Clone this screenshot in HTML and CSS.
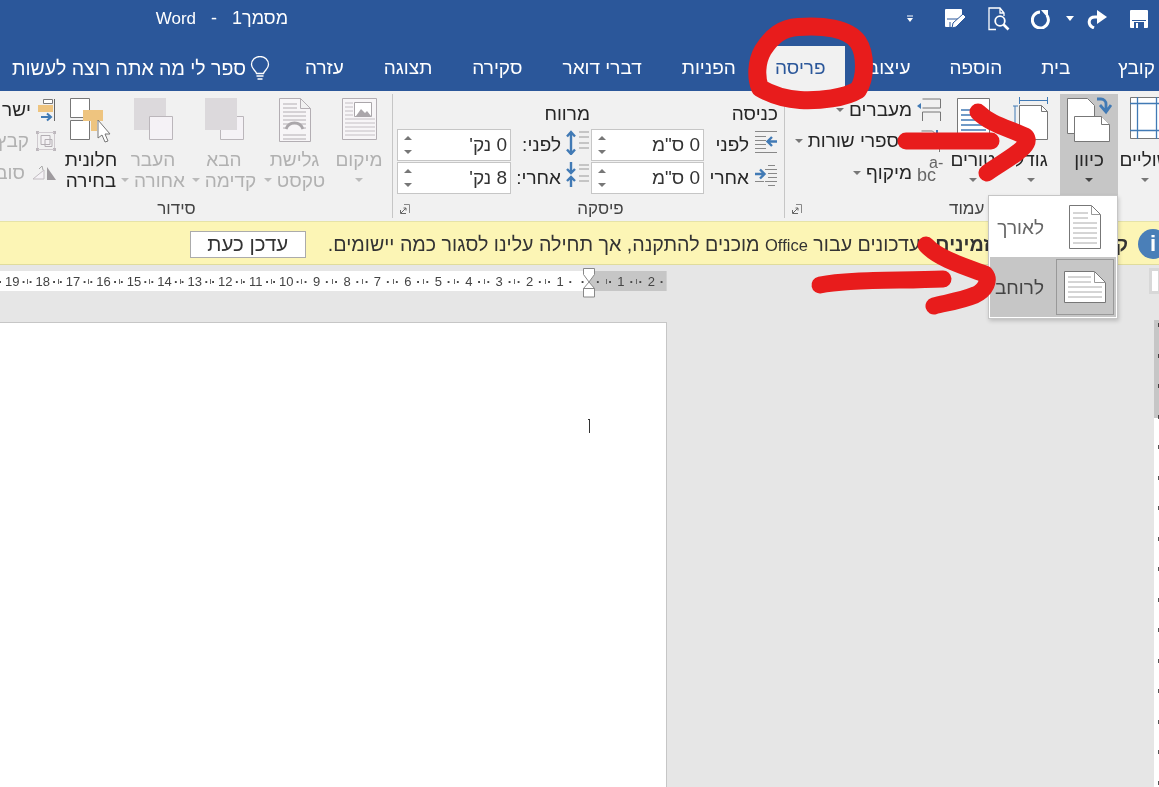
FILE: index.html
```html
<!DOCTYPE html>
<html lang="he">
<head>
<meta charset="utf-8">
<title>מסמך1 - Word</title>
<link rel="stylesheet" href="styles.css">
</head>
<body>
<div class="app">
  <header class="titlebar">
    <div class="doc-title" dir="rtl">מסמך1&nbsp;&nbsp; - &nbsp;&nbsp;<span class="latin">Word</span></div>
    <div class="qat">
      <svg class="q-more" viewBox="0 0 8 8" width="8" height="8"><path d="M1 1h6" stroke="#fff"/><path d="M1 3h6l-3 4z" fill="#fff"/></svg>
      <svg class="q-edit" viewBox="0 0 22 22" width="22" height="22"><path d="M1 2a1 1 0 0 1 1-1h15a1 1 0 0 1 1 1v7L8 19H2a1 1 0 0 1-1-1z" fill="#fff"/><path d="M3 11h13M6 14v5" stroke="#2b579a" fill="none"/><path d="M8 20l1-5 10-9 3 3-10 10z" fill="#fff" stroke="#2b579a"/></svg>
      <svg class="q-prev" viewBox="0 0 22 24" width="22" height="24"><path d="M8 22.500H1V1h11l4 5v3M12 1v5h4" fill="none" stroke="#fff" stroke-width="1.300"/><circle cx="12" cy="14" r="4.800" fill="#2b579a" stroke="#fff" stroke-width="1.800"/><path d="M15.500 17.500l5 5" stroke="#fff" stroke-width="2.600"/></svg>
      <svg class="q-undo" viewBox="0 0 20 20" width="20" height="20"><path d="M16 6.500A8 8 0 1 1 9 3" fill="none" stroke="#fff" stroke-width="3"/><path d="M10 1h7v8z" fill="#fff"/></svg>
      <svg class="q-drop" viewBox="0 0 8 5" width="8" height="5"><path d="M0 0h8L4 5z" fill="#fff"/></svg>
      <svg class="q-redo" viewBox="0 0 22 20" width="22" height="20"><path d="M12 8H9C2 8 1 16 8 19" fill="none" stroke="#fff" stroke-width="3"/><path d="M11 1l10 7-10 7z" fill="#fff"/></svg>
      <svg class="q-save" viewBox="0 0 20 20" width="20" height="20"><path d="M1 2a1 1 0 0 1 1-1h16a1 1 0 0 1 1 1v16a1 1 0 0 1-1 1H2a1 1 0 0 1-1-1z" fill="#fff"/><path d="M3 11.500h14" stroke="#2b579a"/><path d="M5 13h10v6H5z" fill="#2b579a"/><path d="M7 14h2v5H7z" fill="#fff"/></svg>
    </div>
  </header>

  <nav class="tabs" dir="rtl">
    <span class="tab tab-file">קובץ</span>
    <span class="tab">בית</span>
    <span class="tab">הוספה</span>
    <span class="tab tab-design">עיצוב</span>
    <span class="tab tab-active">פריסה</span>
    <span class="tab">הפניות</span>
    <span class="tab">דברי דואר</span>
    <span class="tab">סקירה</span>
    <span class="tab">תצוגה</span>
    <span class="tab">עזרה</span>
    <span class="tell">
      <svg viewBox="0 0 22 26" width="22" height="26"><path d="M7.5 17.500C6.500 14 2.500 13 2.500 8.500a8.500 8 0 0 1 17 0c0 4.500-4 5.500-5 9z" fill="none" stroke="#fff" stroke-width="1.300"/><path d="M7.500 20h7M8.500 23h5" stroke="#fff" stroke-width="1.500"/></svg>
      <span>ספר לי מה אתה רוצה לעשות</span>
    </span>
  </nav>

  <section class="ribbon">
    <div class="group group-arrange">
      <div class="group-body">
        <div class="small-col">
          <div class="small-row">
            <svg viewBox="37 97 20 24" width="20" height="24"><path d="M54.500 98v22" stroke="#666"/><path d="M43.500 98.500h9v4h-9z" fill="#fff" stroke="#777"/><path d="M38 104h15v7H38z" fill="#eec47f"/><path d="M41 116h9M47 112.500l4 3.500-4 3.500" fill="none" stroke="#417ab5" stroke-width="2"/></svg>
            <span class="small-text">ישר</span>
          </div>
          <div class="small-row muted">
            <svg viewBox="35 128 22 24" width="22" height="24"><path d="M36 130h3v3h-3zM53 130h3v3h-3zM36 147h3v3h-3zM53 147h3v3h-3z" fill="#bdb8bd"/><path d="M38 131.500h16M37.500 133v14M54.500 133v14M38 148.500h16" stroke="#cfcacf"/><path d="M41 134.500h9v9h-9zM45 138.500h7v7h-7z" fill="#f5f2f6" fill-opacity=".5" stroke="#b3aeb3"/></svg>
            <span class="small-text">קבץ</span>
          </div>
          <div class="small-row muted">
            <svg viewBox="33 160 26 22" width="26" height="22"><path d="M35 177l11-9v9z" fill="#f5f2f6" stroke="#c2bdc2"/><path d="M49 165l9 13H49z" fill="#9e9a9e"/><path d="M41 167l3-3 1 4" fill="none" stroke="#aaa"/></svg>
            <span class="small-text">סובב</span>
          </div>
        </div>
        <div class="big w-select">
          <div class="big-icon"><svg viewBox="70 98 42 46" width="42" height="46">
            <path d="M70.500 99.500h19v19h-19zM70.500 121.500h19v19h-19z" fill="#fff" stroke="#777"/>
            <path d="M83 111h20v11h-6v10h-6v-10h-8z" fill="#eec47f"/>
            <path d="M98 121v18l4-3 3 7 3-1-3-7h5z" fill="#fff" stroke="#777"/></svg></div>
          <div class="big-label">חלונית<br>בחירה</div>
        </div>
        <div class="big w-back muted">
          <div class="big-icon"><svg viewBox="133 99 41 44" width="41" height="44"><path d="M134 100h32v32h-32z" fill="#dcd9dc"/><path d="M149.500 118.500h23v23h-23z" fill="#f5f2f6" stroke="#bbb6bb"/></svg></div>
          <div class="big-label">העבר<br>אחורה<i class="caret"></i></div>
        </div>
        <div class="big w-fwd muted">
          <div class="big-icon"><svg viewBox="203 99 41 44" width="41" height="44"><path d="M219.500 118.500h23v23h-23z" fill="#f5f2f6" stroke="#bbb6bb"/><path d="M204 100h32v32h-32z" fill="#dcd9dc"/></svg></div>
          <div class="big-label">הבא<br>קדימה<i class="caret"></i></div>
        </div>
        <div class="big w-wrap muted">
          <div class="big-icon"><svg viewBox="279 99 33 46" width="33" height="46"><path d="M280.500 100.500h21l10 10v33h-31zM301.500 100.500v10h10" fill="#f7f5f7" stroke="#b3aeb3"/><path d="M284 106h14M284 110h14M284 114h23M284 118h23M284 137h23M284 141h23" stroke="#b3aeb3"/><path d="M287 131a9 9 0 0 1 17 0" fill="none" stroke="#aaa6aa" stroke-width="3"/><path d="M284 122h23M284 126h5M302 126h5M284 130h2M305 130h2" stroke="#b3aeb3"/></svg></div>
          <div class="big-label">גלישת<br>טקסט<i class="caret"></i></div>
        </div>
        <div class="big w-pos muted">
          <div class="big-icon"><svg viewBox="341 99 37 44" width="37" height="44"><path d="M342.500 100.500h34v41h-34z" fill="#f7f5f7" stroke="#b3aeb3"/><path d="M345 105h8M345 109h8M345 113h8M345 117h8M345 121h30M345 125h30M345 129h30M345 133h30M345 137h30" stroke="#c4bfc4"/><path d="M354.500 104.500h17v14h-17z" fill="#fff" stroke="#aaa6aa"/><path d="M356 118l5-7 4 4 2-2 4 5z" fill="#aaa6aa"/></svg></div>
          <div class="big-label">מיקום<br><i class="caret caret-only"></i></div>
        </div>
      </div>
      <div class="group-label label-arrange">סידור</div>
    </div>

    <div class="group group-para">
      <div class="group-body para-body">
        <div class="para-col para-left">
          <div class="para-head">מרווח</div>
          <div class="para-row">
            <div class="spin"><span class="spin-btns"><i class="up"></i><i class="down"></i></span><span class="spin-val">0 נק'</span></div>
            <span class="para-label">לפני:</span>
            <svg viewBox="564 132 24 26" width="24" height="26"><path d="M577 135h10M577 140h10M577 146h10M577 151h10" stroke="#999"/><path d="M569 136v20M565 139.500l4-4.500 4 4.500M565 152.500l4 4.500 4-4.500" fill="none" stroke="#417ab5" stroke-width="2.400"/></svg>
          </div>
          <div class="para-row">
            <div class="spin"><span class="spin-btns"><i class="up"></i><i class="down"></i></span><span class="spin-val">8 נק'</span></div>
            <span class="para-label">אחרי:</span>
            <svg viewBox="564 165 24 26" width="24" height="26"><path d="M577 168h10M577 172h10M577 179h10M577 184h10" stroke="#999"/><path d="M569 165v11M569 180v10M565 172l4 4 4-4M565 184l4-4 4 4" fill="none" stroke="#417ab5" stroke-width="2.400"/></svg>
          </div>
        </div>
        <div class="para-col para-right">
          <div class="para-head">כניסה</div>
          <div class="para-row">
            <div class="spin"><span class="spin-btns"><i class="up"></i><i class="down"></i></span><span class="spin-val">0 ס"מ</span></div>
            <span class="para-label">לפני</span>
            <svg viewBox="752 132 24 26" width="24" height="26"><path d="M753 134.500h22M753 155.500h22M753 139.500h11M753 143.500h11M753 147.500h11M753 151.500h11" stroke="#888"/><path d="M775 144.500h-9M770 140l-4.500 4.500 4.500 4.500" fill="none" stroke="#417ab5" stroke-width="2.400"/></svg>
            </div>
          <div class="para-row">
            <div class="spin"><span class="spin-btns"><i class="up"></i><i class="down"></i></span><span class="spin-val">0 ס"מ</span></div>
            <span class="para-label">אחרי</span>
            <svg viewBox="752 165 24 26" width="24" height="26"><path d="M766 168.500h7M763 172.500h12M766 176.500h9M766 180.500h9M763 184.500h12M766 188.500h7" stroke="#888"/><path d="M753 177h9M758 172.500l4.500 4.500-4.500 4.500" fill="none" stroke="#417ab5" stroke-width="2.400"/><path d="M753 184.500h9" stroke="#888"/></svg>
          </div>
        </div>
      </div>
      <div class="group-label label-para">פיסקה</div>
      <svg class="launcher" viewBox="0 0 10 10" width="10" height="10"><path d="M4 .5h5.500V9" fill="none" stroke="#888"/><path d="M.500 6v3.500H6M1 9l5-5M3.500 4H6v2.500" fill="none" stroke="#666"/></svg>
    </div>

    <div class="group group-page">
      <div class="group-body">
        <div class="small-col page-col">
          <div class="small-row">
            <svg viewBox="917 97 24 24" width="24" height="24"><path d="M922.500 98h18v9h-18M922.500 120v-9h18v9" fill="none" stroke="#777"/><path d="M917 105l4-3v6z" fill="#417ab5"/></svg>
            <span class="small-text">מעברים</span><i class="caret"></i>
          </div>
          <div class="small-row">
            <svg viewBox="917 128 24 24" width="24" height="24"><path d="M921.500 130h11l7 7v14" fill="#fff" stroke="#777"/><path d="M937 129v4" stroke="#417ab5" stroke-width="2"/></svg>
            <span class="small-text">מספרי שורות</span><i class="caret"></i>
          </div>
          <div class="small-row">
            <span class="bc"><span>a-</span><span>bc</span></span>
            <span class="small-text">מיקוף</span><i class="caret"></i>
          </div>
        </div>
        <div class="big w-page">
          <div class="big-icon"><svg viewBox="956 99 35 48" width="35" height="48"><path d="M957.500 100.500h32v46h-32z" fill="#fff" stroke="#777"/><path d="M961 112h25M961 117h25M961 122h25M961 127h25M961 132h25" stroke="#417ab5" stroke-width="1.500"/></svg></div>
          <div class="big-label">טורים<br><i class="caret caret-only"></i></div>
        </div>
        <div class="big w-page">
          <div class="big-icon"><svg viewBox="1014 99 37 48" width="37" height="48"><path d="M1020 102.500h28M1020.500 99v7M1048.500 99v7M1016 108v33M1013 108h6" stroke="#417ab5" fill="none"/><path d="M1020.500 107.500h22l6 6v28h-28z" fill="#fff" stroke="#777"/><path d="M1042.500 107.500v6h6" fill="none" stroke="#777"/></svg></div>
          <div class="big-label">גודל<br><i class="caret caret-only"></i></div>
        </div>
        <div class="big w-orient active">
          <div class="big-icon"><svg viewBox="1066 98 46 46" width="46" height="46">
            <path d="M1067.500 99.500h20l7 7v28h-27z" fill="#fff" stroke="#777"/>
            <path d="M1074.500 117.500h27l8 8v17h-35z" fill="#fff" stroke="#777"/>
            <path d="M1101.500 117.500v8h8" fill="#fff" stroke="#777"/>
            <path d="M1097 100h4a5 5 0 0 1 5 5v6M1100 106l6 7 5-7" fill="none" stroke="#417ab5" stroke-width="2.800"/></svg></div>
          <div class="big-label">כיוון<br><i class="caret caret-only caret-dark"></i></div>
        </div>
        <div class="big w-margins">
          <div class="big-icon"><svg viewBox="1131 100 38 44" width="38" height="44"><path d="M1131.500 100.500h37v41h-37z" fill="#fff" stroke="#777"/><path d="M1131 106.500h38M1131 133.500h38M1138.500 100v42M1157.500 100v42" stroke="#417ab5" stroke-width="1.300"/></svg></div>
          <div class="big-label">שוליים<br><i class="caret caret-only"></i></div>
        </div>
      </div>
      <div class="group-label label-page">עמוד</div>
      <svg class="launcher" viewBox="0 0 10 10" width="10" height="10"><path d="M4 .5h5.500V9" fill="none" stroke="#888"/><path d="M.500 6v3.500H6M1 9l5-5M3.500 4H6v2.500" fill="none" stroke="#666"/></svg>
    </div>
  </section>

  <section class="notice" dir="rtl">
    <span class="info">i</span>
    <strong>קיימים עדכונים זמינים</strong>
    <span class="notice-text">עדכונים עבור <span class="latin">Office</span> מוכנים להתקנה, אך תחילה עלינו לסגור כמה יישומים.</span>
    <button class="update-btn">עדכן כעת</button>
  </section>

  <section class="ruler-row">
    <div class="ruler">
      <span class="tick">19</span><span class="tick">18</span><span class="tick">17</span><span class="tick">16</span><span class="tick">15</span><span class="tick">14</span><span class="tick">13</span><span class="tick">12</span><span class="tick">11</span><span class="tick">10</span><span class="tick">9</span><span class="tick">8</span><span class="tick">7</span><span class="tick">6</span><span class="tick">5</span><span class="tick">4</span><span class="tick">3</span><span class="tick">2</span><span class="tick">1</span><span class="tick tick-zero"></span><span class="tick">1</span><span class="tick">2</span>
      <svg class="indent-marker" viewBox="0 0 12 30" width="12" height="30"><path d="M.5.500h11v6L6 14 .5 6.500zM.5 20.500L6 14l5.500 6.500zM.5 20.500h11v8.500H.5z" fill="#fff" stroke="#888"/></svg>
    </div>
    <div class="ruler-corner"></div>
  </section>

  <main class="workspace">
    <div class="page"><span class="text-caret"></span></div>
    <div class="v-ruler"><div class="v-ruler-margin"></div></div>
  </main>

  <div class="orient-menu" dir="rtl">
    <div class="orient-item">
      <span class="orient-icon"><svg viewBox="0 0 32 44" width="32" height="44"><path d="M.5.500h22l9 9v34H.5z" fill="#fff" stroke="#777"/><path d="M22.500.500v9h9" fill="none" stroke="#999"/><path d="M4 8h15M4 13h15M4 18h24M4 23h24M4 28h24M4 33h24M4 38h24" stroke="#aaa"/></svg></span>
      <span class="orient-text">לאורך</span>
    </div>
    <div class="orient-item selected">
      <span class="orient-icon"><svg viewBox="0 0 42 32" width="42" height="32"><path d="M.5.500h30l11 11v20H.5z" fill="#fff" stroke="#777"/><path d="M30.500.500v11h11" fill="none" stroke="#999"/><path d="M4 6h23M4 11h23M4 16h34M4 21h34M4 26h34" stroke="#aaa"/></svg></span>
      <span class="orient-text">לרוחב</span>
    </div>
  </div>

  <svg class="ink" viewBox="0 0 1159 787" width="1159" height="787" aria-hidden="true">
    <g fill="none" stroke="#e81c1c" stroke-linecap="round" stroke-linejoin="round">
      <path stroke-width="18" d="M763 50C772 36 782 28 798 27C822 25 848 28 858 42C866 54 866 78 858 90C845 98 820 101 800 100C785 99 770 94 760 88C756 78 756 62 763 50Z"/>
      <path stroke-width="17" d="M906 141H991"/>
      <path stroke-width="17" d="M978 112C990 124 1008 128 1025 136C1030 140 1026 146 1018 152C1008 160 998 165 987 173"/>
      <path stroke-width="17" d="M820 285C850 279 900 281 943 279"/>
      <path stroke-width="17" d="M926 245C938 258 960 265 985 274C990 280 986 290 975 295C960 301 945 303 934 306"/>
    </g>
  </svg>
</div>
</body>
</html>
```
FILE: styles.css
```css
* { box-sizing: border-box; }
html, body { margin: 0; padding: 0; }
body { font-family: "Liberation Sans", "DejaVu Sans", sans-serif; background: #e6e6e6; }
.app { position: relative; width: 1159px; height: 787px; overflow: hidden; display: flex; flex-direction: column; color: #262626; }

.titlebar { flex: 0 0 46px; background: #2b579a; display: flex; align-items: center; color: #fff; padding-left: 157px; }
.doc-title { font-size: 18px; width: 131px; white-space: nowrap; margin-top: -9px; }
.doc-title .latin { font-size: 17px; }
.qat { margin-left: auto; display: flex; align-items: center; margin-top: -9px; padding-right: 10px; }
.q-edit { margin-left: 30px; }
.q-prev { margin-left: 22px; }
.q-undo { margin-left: 21px; }
.q-drop { margin-left: 15px; }
.q-redo { margin-left: 12px; }
.q-save { margin-left: 21px; }

.tabs { flex: 0 0 45px; background: #2b579a; display: flex; align-items: center; color: #fff; font-size: 19px; padding-right: 4px; }
.tab { padding: 0 19.5px; height: 45px; line-height: 44px; white-space: nowrap; }
.tab-file { padding-right: 0; padding-left: 28px; }
.tab-design { padding-left: 23px; }
.tab-active { background: #f1f1f1; color: #2b579a; width: 89px; padding: 0; text-align: center; }
.tab-active ~ .tab { padding: 0 20px; }
.tell { display: flex; align-items: center; gap: 3px; margin-right: 14px; white-space: nowrap; font-size: 19.5px; }

.ribbon { flex: 0 0 131px; background: #f1f1f1; display: flex; border-bottom: 1px solid #e6e3a8; }
.group { position: relative; height: 124px; margin-top: 3px; flex: none; display: flex; flex-direction: column; }
.group-arrange { width: 393px; border-right: 1px solid #c6c6c6; }
.group-para { width: 392px; border-right: 1px solid #c6c6c6; }
.group-page { width: 375px; }
.group-body { flex: 1; display: flex; gap: 4px; }
.group-label { height: 22px; line-height: 26px; font-size: 17px; direction: rtl; color: #444; }
.label-arrange { text-align: center; padding-right: 39px; }
.label-para { text-align: center; padding-left: 24px; }
.label-page { padding-left: 164px; text-align: left; }
.launcher { position: absolute; left: 7px; bottom: 4px; }

.big { flex: none; display: flex; flex-direction: column; align-items: center; height: 101px; }
.big-icon { height: 55px; display: flex; align-items: flex-start; justify-content: center; width: 100%; padding-top: 3px; }
.big-label { font-size: 19px; line-height: 21px; text-align: center; direction: rtl; white-space: nowrap; }
.w-select { width: 58px; }
.w-back { width: 58px; }
.w-fwd { width: 76px; }
.w-wrap { width: 57px; }
.w-pos { width: 64px; }
.w-page { width: 54px; }
.w-orient { width: 58px; margin-left: -2px; }
.w-margins { width: 58px; margin-left: -6px; }
.w-margins .big-icon { padding-left: 7px; }
.muted { color: #b1b1b1; }
.active { background: #c6c6c6; }

.caret { display: inline-block; width: 0; height: 0; border: 4px solid transparent; border-top: 4px solid #777; border-bottom: 0; margin-right: 5px; margin-bottom: 4px; vertical-align: middle; }
.muted .caret { border-top-color: #bbb; }
.caret-only { margin-right: 0; }
.caret-dark { border-top-color: #444; }

.small-col { flex: none; width: 58px; display: flex; flex-direction: column; }
.small-row { height: 31.5px; display: flex; direction: rtl; align-items: center; gap: 6px; white-space: nowrap; font-size: 19px; }
.small-row .caret { margin: 0; }
.group-arrange .small-col { align-items: flex-start; direction: rtl; padding-right: 1px; }

.page-col { width: 157px; padding-right: 1px; }
.page-col .small-row { gap: 5px; }
.page-col .small-text { line-height: 22px; }
.bc { width: 24px; margin-top: -8px; display: flex; flex-direction: column; color: #666; font-size: 18px; line-height: 12px; text-align: left; direction: ltr; }
.bc span:first-child { padding-left: 12px; font-size: 16px; }

.para-body { gap: 1px; padding-left: 4px; }
.para-col { flex: none; display: flex; flex-direction: column; }
.para-left { width: 193px; }
.para-right { width: 187px; }
.para-head { height: 35px; line-height: 39px; font-size: 19px; direction: rtl; text-align: right; }
.para-row { height: 33px; display: flex; align-items: flex-start; }
.para-label { flex: 1; text-align: right; direction: rtl; font-size: 19px; line-height: 31px; padding-right: 5px; white-space: nowrap; }
.para-row svg { flex: none; }
.spin { flex: 0 0 114px; height: 32px; background: #fff; border: 1px solid #c6c6c6; display: flex; justify-content: space-between; align-items: center; padding: 0 3px 0 6px; }
.para-right .spin { flex-basis: 113px; }
.spin-val { direction: rtl; font-size: 19px; color: #333; }
.spin-btns { display: flex; flex-direction: column; gap: 10px; }
.spin-btns i { display: block; width: 0; height: 0; border: 4px solid transparent; }
.spin-btns .up { border-top: 0; border-bottom: 4px solid #777; }
.spin-btns .down { border-bottom: 0; border-top: 4px solid #777; }

.notice { flex: 0 0 43px; padding-top: 2px; background: #fcf5b5; border-bottom: 1px solid #e0dc9c; display: flex; align-items: center; font-size: 19.65px; color: #333; }
.notice .latin { font-size: 16.5px; }
.info { flex: none; width: 30px; height: 30px; border-radius: 50%; background: #4a7fb8; color: #fff; font-weight: bold; font-size: 22px; line-height: 30px; text-align: center; margin-right: -9px; margin-left: 10px; }
.notice strong { white-space: nowrap; margin-left: 15px; font-size: 19.7px; }
.notice-text { white-space: nowrap; }
.update-btn { width: 116px; height: 27px; margin-right: 22px; background: #fff; border: 1px solid #ababab; font: inherit; font-size: 20.5px; line-height: 24px; color: #333; padding: 0; flex: none; }

.ruler-row { flex: 0 0 57px; padding-top: 6px; display: flex; align-items: flex-start; background: #e6e6e6; }
.ruler { position: relative; flex: 0 0 666px; height: 20px; overflow: visible; display: flex; align-items: center; background: linear-gradient(to right, #fff 589px, #c6c6c6 589px); font-size: 13px; color: #444; clip-path: inset(-6px 0 -12px 0); }
.tick { flex: 0 0 30.45px; display: flex; justify-content: space-around; align-items: center; height: 100%; text-align: center; background: linear-gradient(#666, #666) left center / 1px 5px no-repeat; }
.tick:first-child { margin-left: -3px; }
.tick::before, .tick::after { content: "·"; font-weight: bold; }
.tick-zero { background: none; }
.indent-marker { position: absolute; left: 583px; top: -3px; }
.ruler-corner { margin-left: auto; margin-top: -3px; width: 12px; height: 26px; margin-right: -2px; background: #fff; border: 3px solid #d8d8d8; }

.workspace { flex: 1; min-height: 0; display: flex; background: #e6e6e6; }
.page { flex: 0 0 667px; background: #fff; border-top: 1px solid #c6c6c6; border-right: 1px solid #c6c6c6; display: flex; justify-content: flex-end; align-items: flex-start; padding: 96px 76px 0 0; }
.text-caret { width: 2px; height: 14px; border-right: 1px solid #333; border-top: 1px solid #333; }
.v-ruler { flex: none; width: 5px; margin-left: auto; margin-top: -2px; height: calc(100% + 2px); background: repeating-linear-gradient(to bottom, #555 0 4px, transparent 4px 30.5px) 4px 3px / 1px 100% no-repeat, #fff; }
.v-ruler-margin { height: 98px; background: #c6c6c6; mix-blend-mode: multiply; }

.orient-menu { position: absolute; left: 988px; top: 195px; width: 130px; height: 124px; background: #fff; border: 1px solid #c6c6c6; box-shadow: 1px 2px 4px rgba(0,0,0,.18); padding: 1px; display: flex; flex-direction: column; }
.orient-item { height: 60px; display: flex; align-items: center; font-size: 19px; color: #666; }
.orient-item.selected { background: #c6c6c6; color: #444; height: 61px; }
.orient-icon { flex: 0 0 58px; height: 56px; display: flex; align-items: center; justify-content: center; margin-right: 2px; }
.selected .orient-icon { border: 1px solid #999; }
.orient-text { margin-right: 12px; padding-top: 2px; white-space: nowrap; }

.ink { position: absolute; left: 0; top: 0; pointer-events: none; }
```
